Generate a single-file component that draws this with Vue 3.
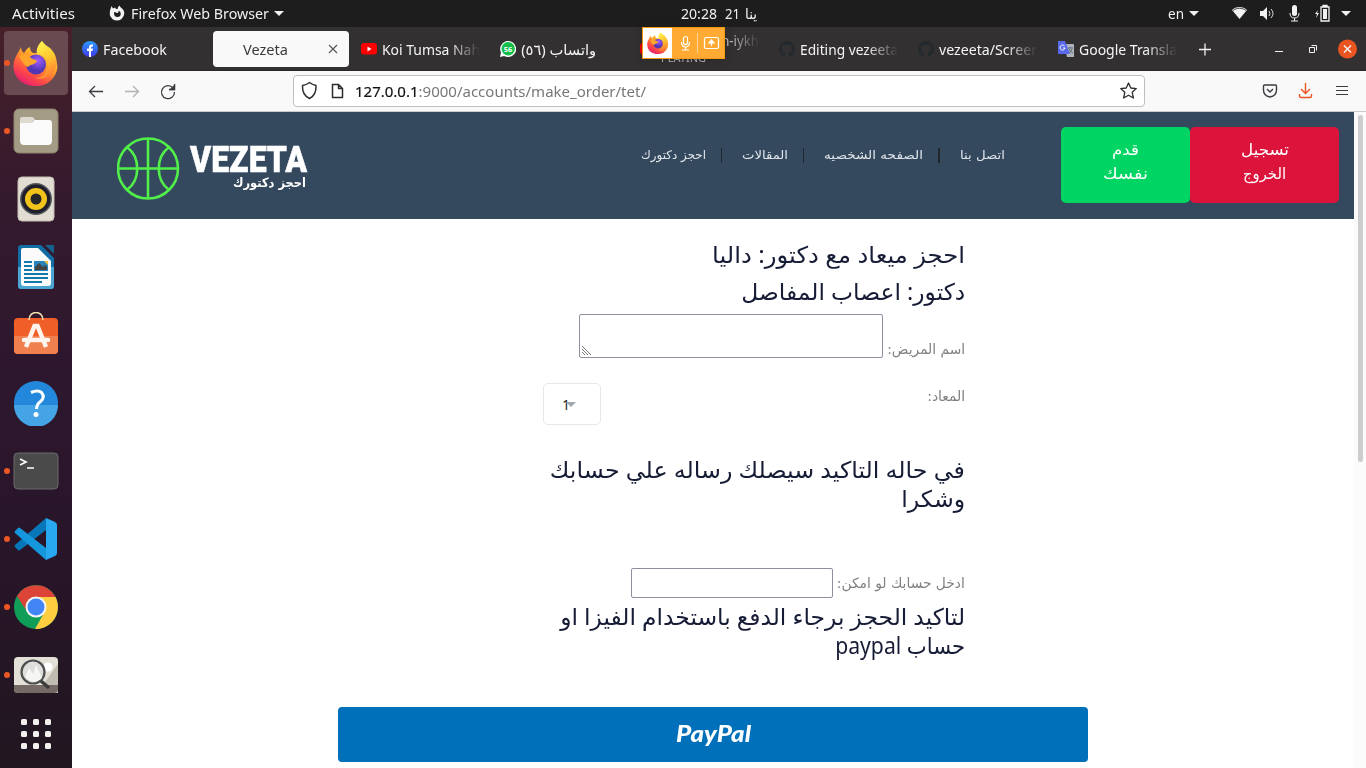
<script setup>
// Scales a single line of text horizontally so that it occupies the given width.
const vFit = {
  mounted(el, { value }) {
    const natural = el.getBoundingClientRect().width
    const rtl = getComputedStyle(el).direction === 'rtl'
    el.style.transformOrigin = rtl ? 'right center' : 'left center'
    el.style.transform = `scaleX(${value / natural})`
    el.style[rtl ? 'marginLeft' : 'marginRight'] = `${value - natural}px`
  },
}

const tabs = [
  { icon: 'facebook', title: 'Facebook', w: 64 },
  { icon: 'none', title: 'Vezeta', w: 45, active: true },
  { icon: 'youtube', title: 'Koi Tumsa Nah', w: 98, fade: true },
  { icon: 'whatsapp', title: 'واتساب (٥٦)', w: 75, rtl: true },
  { icon: 'youtube', title: 'Main Hoon-iykh', w: 98, fade: true, playing: true },
  { icon: 'github', title: 'Editing vezeeta', w: 98, fade: true },
  { icon: 'github', title: 'vezeeta/Screer', w: 98, fade: true },
  { icon: 'translate', title: 'Google Transla', w: 98, fade: true },
]
const dock = [
  { name: 'firefox', dot: true, active: true }, { name: 'files', dot: true }, { name: 'music' },
  { name: 'writer' }, { name: 'store' }, { name: 'help' }, { name: 'terminal', dot: true },
  { name: 'code', dot: true }, { name: 'chrome', dot: true }, { name: 'viewer', dot: true },
]
const nav = [
  { text: 'احجز دكتورك', w: 65 }, { text: 'المقالات', w: 46 },
  { text: 'الصفحه الشخصيه', w: 99 }, { text: 'اتصل بنا', w: 45 },
]
</script>

<template>
  <div class="screen">
    <svg class="defs" width="0" height="0">
      <defs>
        <linearGradient id="ffOuter" x1=".8" y1="0" x2=".2" y2="1"><stop offset="0" stop-color="#fff04a" /><stop offset=".4" stop-color="#ffa927" /><stop offset=".72" stop-color="#ff4c45" /><stop offset="1" stop-color="#e3157b" /></linearGradient>
        <linearGradient id="ffTail" x1=".3" y1="0" x2=".6" y2="1"><stop offset="0" stop-color="#fff44f" /><stop offset=".5" stop-color="#ffc52f" /><stop offset="1" stop-color="#ff7a35" /></linearGradient>
        <radialGradient id="ffGlobe" cx=".6" cy=".3"><stop offset="0" stop-color="#a05cff" /><stop offset="1" stop-color="#5237b5" /></radialGradient>
        <linearGradient id="fbBlue" x1="0" y1="0" x2="0" y2="1"><stop offset="0" stop-color="#2a9bff" /><stop offset="1" stop-color="#4038e8" /></linearGradient>
        <symbol id="firefox" viewBox="0 0 46 46">
          <path d="M8 7c0 3 1 4 3 6 2-3 3-5 6-6 0 3 1 5 3 6h5c-1-5 1-9 4-12 1 4 6 7 10 12 5 7 7 14 4 20-4 9-11 13-20 13C11 46 1 39 .5 27 .4 18 5 14 8 7z" fill="url(#ffOuter)" />
          <path d="M29 1c-4 4-6 8-5 13 9 1 13 8 10 15-2 6-7 9-12 9 9 3 18-2 21-11 2-8-1-14-6-19-3-2-6-4-8-7z" fill="url(#ffTail)" />
          <circle cx="23" cy="24.500" r="10" fill="url(#ffGlobe)" />
          <path d="M6 16c5-3 9-1 12 2 2 2 5 1 6 3-2 4-6 3-9 6-3-1-6-5-9-11z" fill="#ffa52b" />
        </symbol>
      </defs>
    </svg>

    <header class="topbar">
      <span class="activities"><span v-fit="63">Activities</span></span>
      <svg class="fxmono" width="16" height="16" viewBox="0 0 16 16"><path fill-rule="evenodd" d="M2.500 1l1.500 2.500L6 2.500 7 4h1.500Q8.500 2 10.500.5q.5 1.500 2.500 3Q16 6 15 10q-2 5.500-7 5.500T.8 10Q.3 6 2.500 1zM5 7q-.5 5 3.500 5 3 0 3.300-3Q12 6.500 9.500 5.500q.5 2-1 2.500z" fill="#f1f1f1" /></svg>
      <span class="app"><span v-fit="138">Firefox Web Browser</span></span>
      <i class="caret c1"></i>
      <span class="clock"><span v-fit="36">20:28</span></span>
      <span class="day"><span v-fit="15">21</span></span>
      <span class="month"><span v-fit="12">ينا</span></span>
      <span class="lang"><span v-fit="16">en</span></span>
      <i class="caret c2"></i>
      <svg class="status" width="122" height="20" viewBox="0 0 122 20" fill="#f2f2f2">
        <path d="M1 7c4-4 11-4 15 0l-7.500 9z" /><path d="M2 7.500c4-3 9-3 13 0" fill="none" stroke="#444" />
        <path d="M29 8h3l4-4v13l-4-4h-3z" /><path d="M38 8q2 2.500 0 5M40 6q4 4.500 0 9" fill="none" stroke="#ddd" />
        <rect x="61" y="2" width="5" height="11" rx="2.500" /><path d="M59 10q0 5 4.500 5t4.500-5M63.500 15v3M60 18h7" fill="none" stroke="#f2f2f2" />
        <path d="M87 7l-3 4h2l-1 4 3-5h-2z" /><path d="M90 4h8v14h-8zM92 2.500h4v1.500h-4z" fill="none" stroke="#f2f2f2" stroke-width="1.300" /><path d="M92 6h4v10h-4z" />
        <path d="M110 8h10l-5 5z" />
      </svg>
    </header>

    <div class="desktop">
      <aside class="dock">
        <div v-for="d in dock" :key="d.name" class="slot" :class="{ active: d.active }">
          <i v-if="d.dot" class="dot"></i>
          <svg v-if="d.name === 'firefox'" width="46" height="46"><use href="#firefox" width="46" height="46" /></svg>
          <svg v-else-if="d.name === 'files'" width="46" height="46" viewBox="0 0 46 46"><rect x="1" y="1" width="44" height="44" rx="5" fill="#a39b84" stroke="#8b836e" /><path d="M7 14V11q0-2 2-2h10q2 0 3 3h-1l-3 3H7z" fill="#dedad0" /><path d="M7 15h10q3 0 4-3h15q3 0 3 3v18q0 4-4 4H11q-4 0-4-4z" fill="#fafafa" /></svg>
          <svg v-else-if="d.name === 'music'" width="46" height="46" viewBox="0 0 46 46"><rect x="5" y="1" width="36" height="44" rx="4" fill="#e2ddd3" stroke="#c3beb2" /><circle cx="23" cy="23" r="16" fill="#55585c" /><circle cx="23" cy="23" r="14.500" fill="#1e1f2b" /><circle cx="23" cy="23" r="11" fill="#f2c31b" /><circle cx="23" cy="23" r="5.500" fill="#252628" /></svg>
          <svg v-else-if="d.name === 'writer'" width="46" height="46" viewBox="0 0 46 46"><path d="M8 1h20l13 13v28q0 3-3 3H8q-3 0-3-3V4q0-3 3-3z" fill="#126da4" /><path d="M5 23h36v19q0 3-3 3H8q-3 0-3-3z" fill="#4aa5d2" /><path d="M32 1h9v9z" fill="#16608d" /><path d="M10 4h15l13 13v22q0 3-3 3H11q-3 0-3-3V6q0-2 2-2z" fill="#fbfbfb" /><path d="M11 18h8M11 22h8M11 26h8M11 30h24M11 34h24M11 38h18" stroke="#1478ad" stroke-width="2" /><path d="M21 17h14v10H21z" fill="#2785bd" /><path d="M22 26v-3l4-4 4 4 2-2 2 2v3z" fill="#444" /><path d="M31 17h4v4z" fill="#f6c33b" /></svg>
          <svg v-else-if="d.name === 'store'" width="46" height="46" viewBox="0 0 46 46"><rect x="1" y="6" width="44" height="36" rx="4" fill="#f15f28" /><path d="M1 24h44v14q0 4-4 4H5q-4 0-4-4z" fill="#f1804f" /><path d="M16 8c0-10 14-10 14 0" fill="none" stroke="#f6dfad" stroke-width="1.500" /><path d="M13 35L21.500 14h3L33 35" fill="none" stroke="#fff4ed" stroke-width="4.500" /><path d="M11 28h24" stroke="#fff4ed" stroke-width="4.500" stroke-linecap="round" /></svg>
          <svg v-else-if="d.name === 'help'" width="46" height="46" viewBox="0 0 46 46"><circle cx="23" cy="23" r="22" fill="#2388dc" /><path d="M1 25a22 22 0 0044 0z" fill="#45a4e5" /><path d="M18 12.500q7-3 10.500 0 4 5-1 9-4 3-4 7.500" fill="none" stroke="#fff" stroke-width="3" /><circle cx="23" cy="34.500" r="2.500" fill="#fff" /></svg>
          <svg v-else-if="d.name === 'terminal'" width="46" height="46" viewBox="0 0 46 46"><rect x="1" y="5" width="44" height="36" rx="4" fill="#4a4a4a" stroke="#6b6b6b" /><path d="M7 11l6 3-6 3M14 20h7" fill="none" stroke="#fff" stroke-width="1.700" /></svg>
          <svg v-else-if="d.name === 'code'" width="46" height="46" viewBox="0 0 46 46"><path d="M33 2v12L7 34q-1 1-2 0l-3-3q-1-1 0-2z" fill="#0877b9" /><path d="M33 44V32L7 12q-1-1-2 0l-3 3q-1 1 0 2z" fill="#1497dc" /><path d="M33 2l9 4q2 1 2 3v28q0 2-2 3l-9 4z" fill="#28a8f1" /></svg>
          <svg v-else-if="d.name === 'chrome'" width="46" height="46" viewBox="0 0 46 46"><circle cx="23" cy="23" r="22" fill="#109d58" /><path d="M4 12A22 22 0 0142.500 13H23a10 10 0 00-9.500 14z" fill="#db4437" /><path d="M42.500 13A22 22 0 0122 45l9-16q4-9-6-16z" fill="#ffcd40" /><circle cx="23" cy="23" r="10.500" fill="#f5f5f5" /><circle cx="23" cy="23" r="8.500" fill="#4286f5" /></svg>
          <svg v-else width="46" height="46" viewBox="0 0 46 46"><rect x="1" y="5" width="44" height="36" rx="4" fill="#e3e1d7" /><path d="M45 12L24 41h21z" fill="#c0bcb0" /><path d="M1 33h44v4q0 4-4 4H5q-4 0-4-4z" fill="#756a66" /><circle cx="35" cy="15" r="4.500" fill="#fff" /><circle cx="20" cy="20" r="11.500" fill="#dededb" stroke="#4c4e50" stroke-width="2.200" /><path d="M12 25l4-9 4 6 3-9 6 13q-8 8-17-1z" fill="#f5f5f3" /><path d="M28 29l8 7" stroke="#3a3c3e" stroke-width="3.500" /></svg>
        </div>
        <div class="apps"><i v-for="n in 9" :key="n"></i></div>
      </aside>

      <div class="browser">
        <div class="tabbar">
          <div v-for="(t, i) in tabs" :key="i" class="tab" :class="{ active: t.active, playing: t.playing }">
            <svg v-if="t.icon === 'facebook'" width="16" height="16" viewBox="0 0 16 16"><circle cx="8" cy="8" r="8" fill="url(#fbBlue)" /><path d="M7 16V10H5V7.500h2V6q0-3 4-2.500v2H10Q9 5.500 9 7v.5h2L10.500 10H9v6z" fill="#fff" /></svg>
            <svg v-else-if="t.icon === 'youtube'" width="16" height="16" viewBox="0 0 16 16"><rect x="0" y="2" width="16" height="11.500" rx="3" fill="#f00" /><path d="M6.500 5.500v5L10.500 8z" fill="#fff" /></svg>
            <svg v-else-if="t.icon === 'whatsapp'" width="16" height="16" viewBox="0 0 16 16"><path d="M0 16l1-4.500A8 8 0 118 16q-2 0-4-1z" fill="#fff" /><circle cx="8.200" cy="7.800" r="6.700" fill="#12bf4b" /><text x="8.100" y="10.600" font-family="Open Sans,sans-serif" font-size="7.500" font-weight="700" fill="#fff" text-anchor="middle">56</text></svg>
            <svg v-else-if="t.icon === 'github'" width="16" height="16" viewBox="0 0 16 16"><path fill="#24292e" d="M8 0a8 8 0 00-2.530 15.590c.4.070.55-.17.550-.38V13.700c-2.010.37-2.530-.49-2.690-.94-.09-.23-.48-.94-.82-1.130-.28-.15-.68-.52-.01-.53.630-.01 1.080.580 1.230.820.720 1.210 1.870.870 2.330.660.070-.52.280-.87.510-1.070-1.780-.2-3.640-.89-3.640-3.950 0-.87.310-1.590.820-2.150-.08-.2-.36-1.020.080-2.120 0 0 .670-.21 2.200.820a7.500 7.500 0 014 0c1.530-1.040 2.200-.820 2.200-.820.440 1.100.160 1.920.080 2.120.510.560.820 1.270.820 2.150 0 3.070-1.870 3.750-3.650 3.950.290.250.540.730.540 1.480v2.200c0 .210.150.460.550.380A8 8 0 008 0z" /></svg>
            <svg v-else-if="t.icon === 'translate'" width="16" height="16" viewBox="0 0 16 16"><path d="M6 3h9q1 0 1 1v12h-7z" fill="#aeb4bd" /><path d="M0 0h7l5 13H1q-1 0-1-1z" fill="#596bec" /><path d="M6.500 5A2.500 2.500 0 107 7H5" stroke="#fff" fill="none" /><path d="M10 7h5M12.500 6v1M14 8q-1 3-3 4M11 8q1 3 4 4" stroke="#5f6871" fill="none" /></svg>
            <i v-else class="noicon"></i>
            <div class="label" :class="{ fade: t.fade }" :dir="t.rtl ? 'rtl' : 'ltr'"><span v-fit="t.w">{{ t.title }}</span><small v-if="t.playing"><b v-fit="45">PLAYING</b></small></div>
            <svg v-if="t.active" class="close" width="10" height="10" viewBox="0 0 10 10"><path d="M1 1l8 8M9 1L1 9" stroke="#555" stroke-width="1.100" /></svg>
          </div>
          <svg class="winctl" width="174" height="42" viewBox="0 0 174 42" fill="none" stroke="#f2f2f2">
            <path d="M12 22.500h12M18 16.500v12" stroke-width="1.300" /><path d="M88 24.500h8" />
            <path d="M122.500 20.500h5v5h-5zM124.500 18.500h5v5" /><circle cx="160.500" cy="22" r="9.500" fill="#e95420" stroke="none" /><path d="M157 18.500l7 7M164 18.500l-7 7" stroke-width="1.500" />
          </svg>
          <div class="sharing">
            <div class="sharefx"><svg width="22" height="22"><use href="#firefox" width="22" height="22" /></svg></div>
            <svg width="52" height="30" viewBox="0 0 52 30" fill="none" stroke="#fff" stroke-width="1.200"><rect x="11.500" y="8.500" width="4" height="8" rx="2" /><path d="M9.500 14q0 5 4 5t4-5M13.500 19v3M10 22h7" /><path d="M25.500 5v20" stroke="#ffd59a" stroke-width="1" /><rect x="32.500" y="9.500" width="14" height="11" rx="1.500" /><path d="M39.500 18v-5M37 15l2.500-3 2.500 3z" fill="#fff" /></svg>
          </div>
        </div>

        <div class="toolbar">
          <svg class="navicons" width="110" height="40" viewBox="0 0 110 40" fill="none" stroke="#3c3c40" stroke-width="1.300"><path d="M31 20.500H17.500M23 15l-5.500 5.500L23 26" /><path d="M53 20.500h13.500M61 15l5.500 5.500L61 26" stroke="#b2b2b4" /><path d="M101 17a6.500 6.500 0 101.500 4M97 18.500h5.500V13" /><path d="M98.500 18.500h4v-4z" fill="#3c3c40" /></svg>
          <div class="urlbar">
            <svg width="60" height="30" viewBox="0 0 60 30" fill="none" stroke="#2c2c31" stroke-width="1.500"><path d="M15.500 6.500Q19 9 22 9.500 22.500 19 15.500 22.500 8 19 8.500 9.500 12 9 15.500 6.500z" stroke-linejoin="round" /><path d="M38.500 8.500h6l4 4v9h-10zM44.500 8.500v4h4" stroke-linejoin="round" /></svg>
            <span class="url"><span v-fit="291"><b>127.0.0.1</b>:9000/accounts/make_order/tet/</span></span>
            <svg width="30" height="30" viewBox="0 0 30 30" fill="none" stroke="#2c2c31" stroke-width="1.300" stroke-linejoin="round"><path d="M14.500 7l2.300 5 5.500.6-4.100 3.700 1.200 5.700-4.900-2.800-4.900 2.800 1.200-5.700-4.100-3.700 5.500-.6z" /></svg>
          </div>
          <svg class="right" width="110" height="40" viewBox="0 0 110 40" fill="none" stroke="#3c3c40" stroke-width="1.400"><path d="M8.500 14h11q1 0 1 1v4q0 6-6.500 7-6.500-1-6.500-7v-4q0-1 1-1zM11 18l3 3 3-3" /><path d="M49.500 12v10M45 18l4.500 4.500L54 18M43.500 23v2q0 1.500 1.500 1.500h9q1.500 0 1.500-1.500v-2" stroke="#e95420" /><path d="M80 15.500h12M80 19.500h12M80 23.500h12" stroke-width="1.100" /></svg>
        </div>

        <div class="viewport">
          <div class="page">
            <div class="sitehead">
              <svg class="ball" width="64" height="64" viewBox="0 0 64 64" fill="none" stroke="#50ef49" stroke-width="2.600"><circle cx="31" cy="31.500" r="30" /><path d="M31 1.500v60M1 31.500h60M10.500 10.500c13 10 13 32 0 42M51.500 10.500c-13 10-13 32 0 42" /></svg>
              <div class="brand"><span class="name"><span v-fit="117">VEZETA</span></span><span class="sub"><span v-fit="73">احجز دكتورك</span></span></div>
              <nav><template v-for="(n, i) in nav" :key="n.text"><i v-if="i" class="sep"></i><a><span v-fit="n.w">{{ n.text }}</span></a></template></nav>
              <button class="join"><span v-fit="27">قدم</span><span v-fit="45">نفسك</span></button>
              <button class="logout"><span v-fit="48">تسجيل</span><span v-fit="43">الخروج</span></button>
            </div>
            <main dir="rtl">
              <h2><span v-fit="253">احجز ميعاد مع دكتور: داليا</span></h2>
              <h2 class="second"><span v-fit="224">دكتور: اعصاب المفاصل</span></h2>
              <div class="row name-row"><label><span v-fit="78">اسم المريض:</span></label><div class="area"><svg width="11" height="11" viewBox="0 0 11 11"><path d="M1 1l9 9M1 4l6 6M1 7l3 3" stroke="#777" /></svg></div></div>
              <div class="row time-row"><label><span v-fit="38">المعاد:</span></label><div class="select"><span>1</span><i></i></div></div>
              <h2 class="tight note"><span v-fit="415">في حاله التاكيد سيصلك رساله علي حسابك</span></h2>
              <h2 class="tight"><span v-fit="64">وشكرا</span></h2>
              <div class="row account-row"><label><span v-fit="128">ادخل حسابك لو امكن:</span></label><div class="input"></div></div>
              <h2 class="tight pay"><span v-fit="405">لتاكيد الحجز برجاء الدفع باستخدام الفيزا او</span></h2>
              <h2 class="tight"><span v-fit="130">حساب paypal</span></h2>
            </main>
            <button class="paypal"><span v-fit="75">PayPal</span></button>
          </div>
          <div class="scroll"><i></i></div>
        </div>
      </div>
    </div>
  </div>
</template>

<style>
html, body { margin: 0; overflow: hidden; }
</style>
<style scoped>
* { box-sizing: border-box; }
.screen { width: 1366px; height: 768px; overflow: hidden; display: flex; flex-direction: column; background: #fff; font: 14.5px/20px "Noto Sans", "DejaVu Sans", sans-serif; }
.defs { position: absolute; }
span { white-space: nowrap; }
svg { flex: none; display: block; }
.topbar { height: 27px; flex: none; background: #1d1d1d; color: #f0f0f0; display: flex; align-items: center; }
.topbar > span { display: flex; flex: none; margin-top: -1px; }
.topbar > .activities { margin-left: 12px; }
.fxmono { margin: -1px 6px 0 34px; }
.caret { border: 5px solid transparent; border-top-color: #f0f0f0; border-bottom: 0; }
.c1 { margin-left: 5px; }
.topbar > .clock { margin-left: 397px; }
.topbar > .day { margin-left: 8px; }
.topbar > .month { margin-left: 5px; }
.topbar > .lang { margin-left: 411px; }
.c2 { margin-left: 5px; }
.status { margin: -1px 0 0 32px; }
.desktop { display: flex; flex: 1; min-height: 0; }
.dock { width: 72px; padding-top: 2px; background: linear-gradient(#47202a, #351a2d 22%, #2d172e 48%, #281528 74%, #211720); }
.slot { height: 68px; display: flex; align-items: center; justify-content: center; position: relative; }
.slot.active::before { content: ""; position: absolute; inset: 2px 4px; border-radius: 4px; background: #694a51; }
.slot svg { position: relative; }
.dot { position: absolute; left: 4px; top: 31px; width: 6px; height: 6px; border-radius: 50%; background: #ea5724; }
.apps { display: grid; grid-template-columns: repeat(3, 6px); gap: 6px; width: 30px; margin: 10px 21px; }
.apps i { height: 6px; border-radius: 1.500px; background: #f3f1ee; }
.browser { flex: 1; min-width: 0; display: flex; flex-direction: column; }
.tabbar { height: 43px; flex: none; display: flex; background: #333032; position: relative; color: #f4f4f4; }
.tab { width: 135.4px; height: 36px; margin: 4px 2px 0; padding-left: 8px; display: flex; align-items: center; flex: none; border-radius: 4px; position: relative; }
.tab:nth-child(8) { margin-right: 0; }
.tab.active { background: #f9f9fa; color: #3b3b3d; }
.noicon { width: 16px; }
.label { margin-left: 5px; display: flex; flex: none; }
.tab.active .label { margin-left: 6px; }
.fade { width: 98px; -webkit-mask-image: linear-gradient(90deg, #000 68%, transparent 100%); mask-image: linear-gradient(90deg, #000 68%, transparent 100%); }
.playing .label { flex-direction: column; align-items: flex-start; width: 99px; height: 34px; margin-top: 0; }
.playing .label > span { line-height: 17px; color: #ccc; }
.playing .label small { font-size: 10.5px; line-height: 13px; margin-top: 3px; color: #ccc; display: flex; }
.playing small b { font-weight: 400; }
.close { position: absolute; left: 115px; top: 13px; }
.winctl { margin-left: 2px; }
.sharing { position: absolute; left: 570px; top: 0; width: 83px; height: 32px; border: 1px solid #f6980d; background: #ffaa33; display: flex; box-shadow: 0 1px 6px #2228; }
.sharefx { width: 29px; background: #fff; display: flex; align-items: center; justify-content: center; flex: none; }
.toolbar { height: 42px; flex: none; background: #f9f9fa; border-top: 1px solid #29272a; border-bottom: 1px solid #ccccce; display: flex; align-items: center; }
.urlbar { margin-left: 111px; width: 852px; height: 32px; border: 1px solid #bfbfc2; border-radius: 4px; background: #fff; display: flex; align-items: center; justify-content: space-between; }
.url { display: flex; margin-right: auto; margin-left: 1px; color: #77777a; font-size: 15px; }
.url b { font-weight: 400; color: #111; -webkit-text-stroke: .2px #111; }
.right { margin-left: 111px; }
.viewport { flex: 1; display: flex; min-height: 0; }
.page { width: 1282px; background: #fff; }
.sitehead { height: 107px; background: #34495e; display: flex; align-items: flex-start; color: #fff; }
.ball { margin: 25px 0 0 45px; }
.brand { margin: 34px 0 0 9px; width: 118px; display: flex; flex-direction: column; }
.name { display: flex; font: 900 37px/28px Roboto, sans-serif; height: 29px; }
.name > span { -webkit-text-stroke: .5px #fff; }
.sub { display: flex; margin-left: 43px; font: 700 13px/15px "DejaVu Sans", sans-serif; }
nav { display: flex; align-items: center; height: 20px; margin: 33px 0 0 333px; width: 364px; font: 12px/20px "DejaVu Sans", sans-serif; color: #e0e5e9; }
nav a { display: flex; flex: none; }
.sep { width: 1.500px; height: 15px; background: #20272d; margin: 0 20px 0 14.7px; flex: none; }
button { border: 0; border-radius: 5px; color: #fff; padding: 0; display: flex; align-items: center; }
.join, .logout { width: 129px; height: 76px; flex-direction: column; margin-top: 15px; padding-top: 11px; font: 15.5px/24px "DejaVu Sans", sans-serif; background: #00d563; flex: none; }
.join { margin-left: 56px; }
.logout { width: 149px; background: #dc143c; }
main { width: 426px; margin-left: 467px; padding-top: 17px; font-family: "DejaVu Sans", sans-serif; color: #171c36; }
h2 { margin: 0; height: 37px; display: flex; font: 400 23px/36px "Noto Sans", "DejaVu Sans", sans-serif; }
h2.second { height: 41px; }
h2.tight { height: 29px; line-height: 27px; }
.row { display: flex; color: #808080; font-size: 14px; }
.row label { display: flex; height: 20px; flex: none; }
.name-row { height: 69px; }
.name-row label { margin: 25px 0 0 4px; }
.area { width: 304px; height: 44px; border: 1px solid #8f8f9d; border-radius: 2px; display: flex; align-items: flex-end; justify-content: flex-end; padding: 1px; }
.time-row { height: 73px; justify-content: space-between; }
.time-row label { margin-top: 3px; }
.select { width: 58px; height: 42px; margin-left: 4px; border: 1px solid #e8e8e8; border-radius: 5px; display: flex; align-items: center; color: #222; position: relative; padding-right: 30px; font: 14px "Noto Sans", sans-serif; }
.select i { position: absolute; left: 22px; top: 18px; border: 5px solid transparent; border-top-color: #a0a7ae; border-bottom: 0; }
.account-row { height: 35px; margin-top: 54px; }
.account-row label { margin: 5px 0 0 4px; }
.input { width: 202px; height: 30px; border: 1px solid #8f8f9d; border-radius: 2px; }
.paypal { width: 750px; height: 55px; margin: 46px 0 0 266px; justify-content: center; border-radius: 4px; background: #0070ba; font: italic 900 22px/52px Lato, sans-serif; }
.paypal span { margin-top: -2px; }
.scroll { width: 12px; background: #fbfbfb; padding: 3px 2px 0 4px; }
.scroll i { display: block; width: 5px; height: 347px; border-radius: 3px; background: #cdcdcd; }
</style>
